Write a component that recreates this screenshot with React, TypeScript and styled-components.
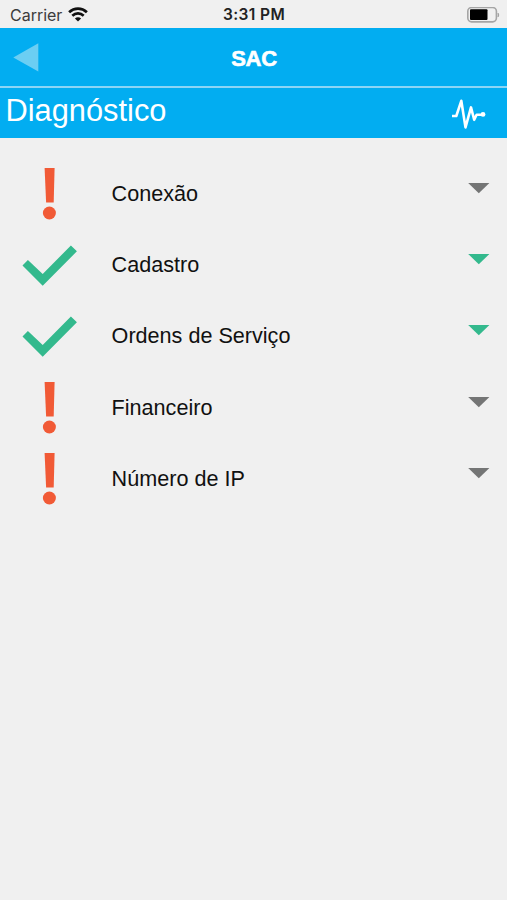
import React from "react";
import styled, { createGlobalStyle } from "styled-components";

const GlobalStyle = createGlobalStyle`
  * { box-sizing: border-box; }
  html, body { margin: 0; background: #f0f0f0; }
`;

const Screen = styled.div`
  display: flex;
  flex-direction: column;
  width: 507px;
  height: 900px;
  overflow: hidden;
  background: #f0f0f0;
  font-family: "Liberation Sans", Arial, sans-serif;
  color: #111;
`;

const StatusBar = styled.header`
  display: grid;
  grid-template-columns: 1fr auto 1fr;
  align-items: center;
  height: 28px;
  padding: 1px 7px 0 10px;
  font-family: Inter, sans-serif;
  font-size: 16px;
  line-height: 26px;
`;

const Carrier = styled.div`
  display: flex;
  align-items: center;
  gap: 6px;
  color: #3c3c3c;
  letter-spacing: -0.02px;
`;

const Clock = styled.time`
  padding-top: 1px;
  color: #222;
  font-size: 15.5px;
  font-weight: 600;
  letter-spacing: 0.4px;
  transform: translateX(-1px);
`;

const BatterySlot = styled.div`
  display: flex;
  justify-content: flex-end;
`;

const NavBar = styled.nav`
  display: grid;
  grid-template-columns: 50px 1fr 50px;
  align-items: center;
  height: 58px;
  background: #02adf1;
`;

const BackButton = styled.button`
  display: flex;
  width: 50px;
  height: 58px;
  padding: 15px 0 0 13px;
  border: 0;
  background: none;
`;

const NavTitle = styled.h1`
  margin: 4px 0 0 1px;
  color: #fff;
  font-size: 22px;
  font-weight: 700;
  line-height: 26px;
  letter-spacing: -0.3px;
  text-align: center;
  -webkit-text-stroke: 0.6px #fff;
`;

const SectionBar = styled.div`
  display: flex;
  justify-content: space-between;
  height: 52px;
  padding: 0 20px 0 5.5px;
  border-top: 2px solid #8cd5f5;
  background: #02adf1;
`;

const SectionTitle = styled.h2`
  margin: 5px 0 0;
  color: #fff;
  font-size: 30.8px;
  font-weight: 400;
  line-height: 36px;
`;

const PulseSlot = styled.div`
  padding-top: 9px;
`;

const List = styled.ul`
  margin: 0;
  padding: 19.5px 0 0;
  list-style: none;
`;

const Row = styled.li`
  display: grid;
  grid-template-columns: 99px 1fr 39px;
  column-gap: 12px;
  height: 71.4px;
`;

const StatusSlot = styled.div`
  display: flex;
  justify-content: center;
`;

const Label = styled.span`
  padding: 23.2px 0 0 0.6px;
  font-size: 21.6px;
  line-height: 26px;
`;

const Toggle = styled.button`
  display: flex;
  align-items: flex-start;
  padding: 25px 0 0;
  border: 0;
  background: none;
`;

const WifiIcon = () => (
  <svg width="20" height="15" viewBox="0 0 20 15" fill="none" stroke="#111" strokeWidth="2.7">
    <path d="M1.1 5.2C6.2.5 13.8.5 18.9 5.2" />
    <path d="M4.3 8.7c3.3-3 8.1-3 11.4 0" />
    <path d="M6.9 11.5c1.8-1.6 4.4-1.6 6.2 0L10 14.6Z" fill="#111" stroke="none" />
  </svg>
);

const BatteryIcon = () => (
  <svg width="33" height="16" viewBox="0 0 33 16">
    <rect x=".8" y=".5" width="28.6" height="14.4" rx="3.8" fill="none" stroke="#a5a5a5" strokeWidth="1.6" />
    <rect x="3" y="2.3" width="17.5" height="10.6" rx="1" fill="#000" />
    <path d="M31 6q1.7 2 0 4Z" fill="#999" stroke="#999" strokeWidth=".6" />
  </svg>
);

const BackIcon = () => (
  <svg width="26" height="29" viewBox="0 0 26 29">
    <path d="M25.3.2v28.4L.3 14.4Z" fill="#6bcef3" />
  </svg>
);

const PulseIcon = () => (
  <svg width="36" height="36" viewBox="0 0 36 36" fill="none" stroke="#fff" strokeWidth="2.6" strokeLinejoin="round">
    <path d="M1 19h4.3L10.3 3.8l4.2 26.6L20 10.4l3.2 12.4 2.4-5.1h7" />
    <circle cx="32" cy="17.4" r="2.4" fill="#fff" stroke="none" />
  </svg>
);

const AlertIcon = () => (
  <svg width="56" height="70" viewBox="0.6 0 56 70" fill="#f15a36">
    <path d="M23.2 10h10l-.9 34.4h-7.6Z" />
    <circle cx="28" cy="55" r="6.5" />
  </svg>
);

const CheckIcon = () => (
  <svg width="56" height="70" viewBox="0.4 0 56 70">
    <path d="m.9 36.4 5.4-5.5L21.1 45 49.3 16.5l6 5.8-34.2 34.4Z" fill="#33b98d" />
  </svg>
);

const CaretIcon = ({ ok }: { ok: boolean }) => (
  <svg width="22" height="11" viewBox="0 0 22 11">
    <path d="M.2 0h21.2L10.8 10.2Z" fill={ok ? "#33b98d" : "#747575"} />
  </svg>
);

const items = [
  { label: "Conexão", ok: false },
  { label: "Cadastro", ok: true },
  { label: "Ordens de Serviço", ok: true },
  { label: "Financeiro", ok: false },
  { label: "Número de IP", ok: false },
];

export default function App() {
  return (
    <>
      <GlobalStyle />
      <Screen>
        <StatusBar>
          <Carrier>
            Carrier
            <WifiIcon />
          </Carrier>
          <Clock>3:31 PM</Clock>
          <BatterySlot>
            <BatteryIcon />
          </BatterySlot>
        </StatusBar>
        <NavBar>
          <BackButton aria-label="Voltar">
            <BackIcon />
          </BackButton>
          <NavTitle>SAC</NavTitle>
        </NavBar>
        <SectionBar>
          <SectionTitle>Diagnóstico</SectionTitle>
          <PulseSlot>
            <PulseIcon />
          </PulseSlot>
        </SectionBar>
        <List>
          {items.map(({ label, ok }) => (
            <Row key={label}>
              <StatusSlot>{ok ? <CheckIcon /> : <AlertIcon />}</StatusSlot>
              <Label>{label}</Label>
              <Toggle aria-label={label}>
                <CaretIcon ok={ok} />
              </Toggle>
            </Row>
          ))}
        </List>
      </Screen>
    </>
  );
}
